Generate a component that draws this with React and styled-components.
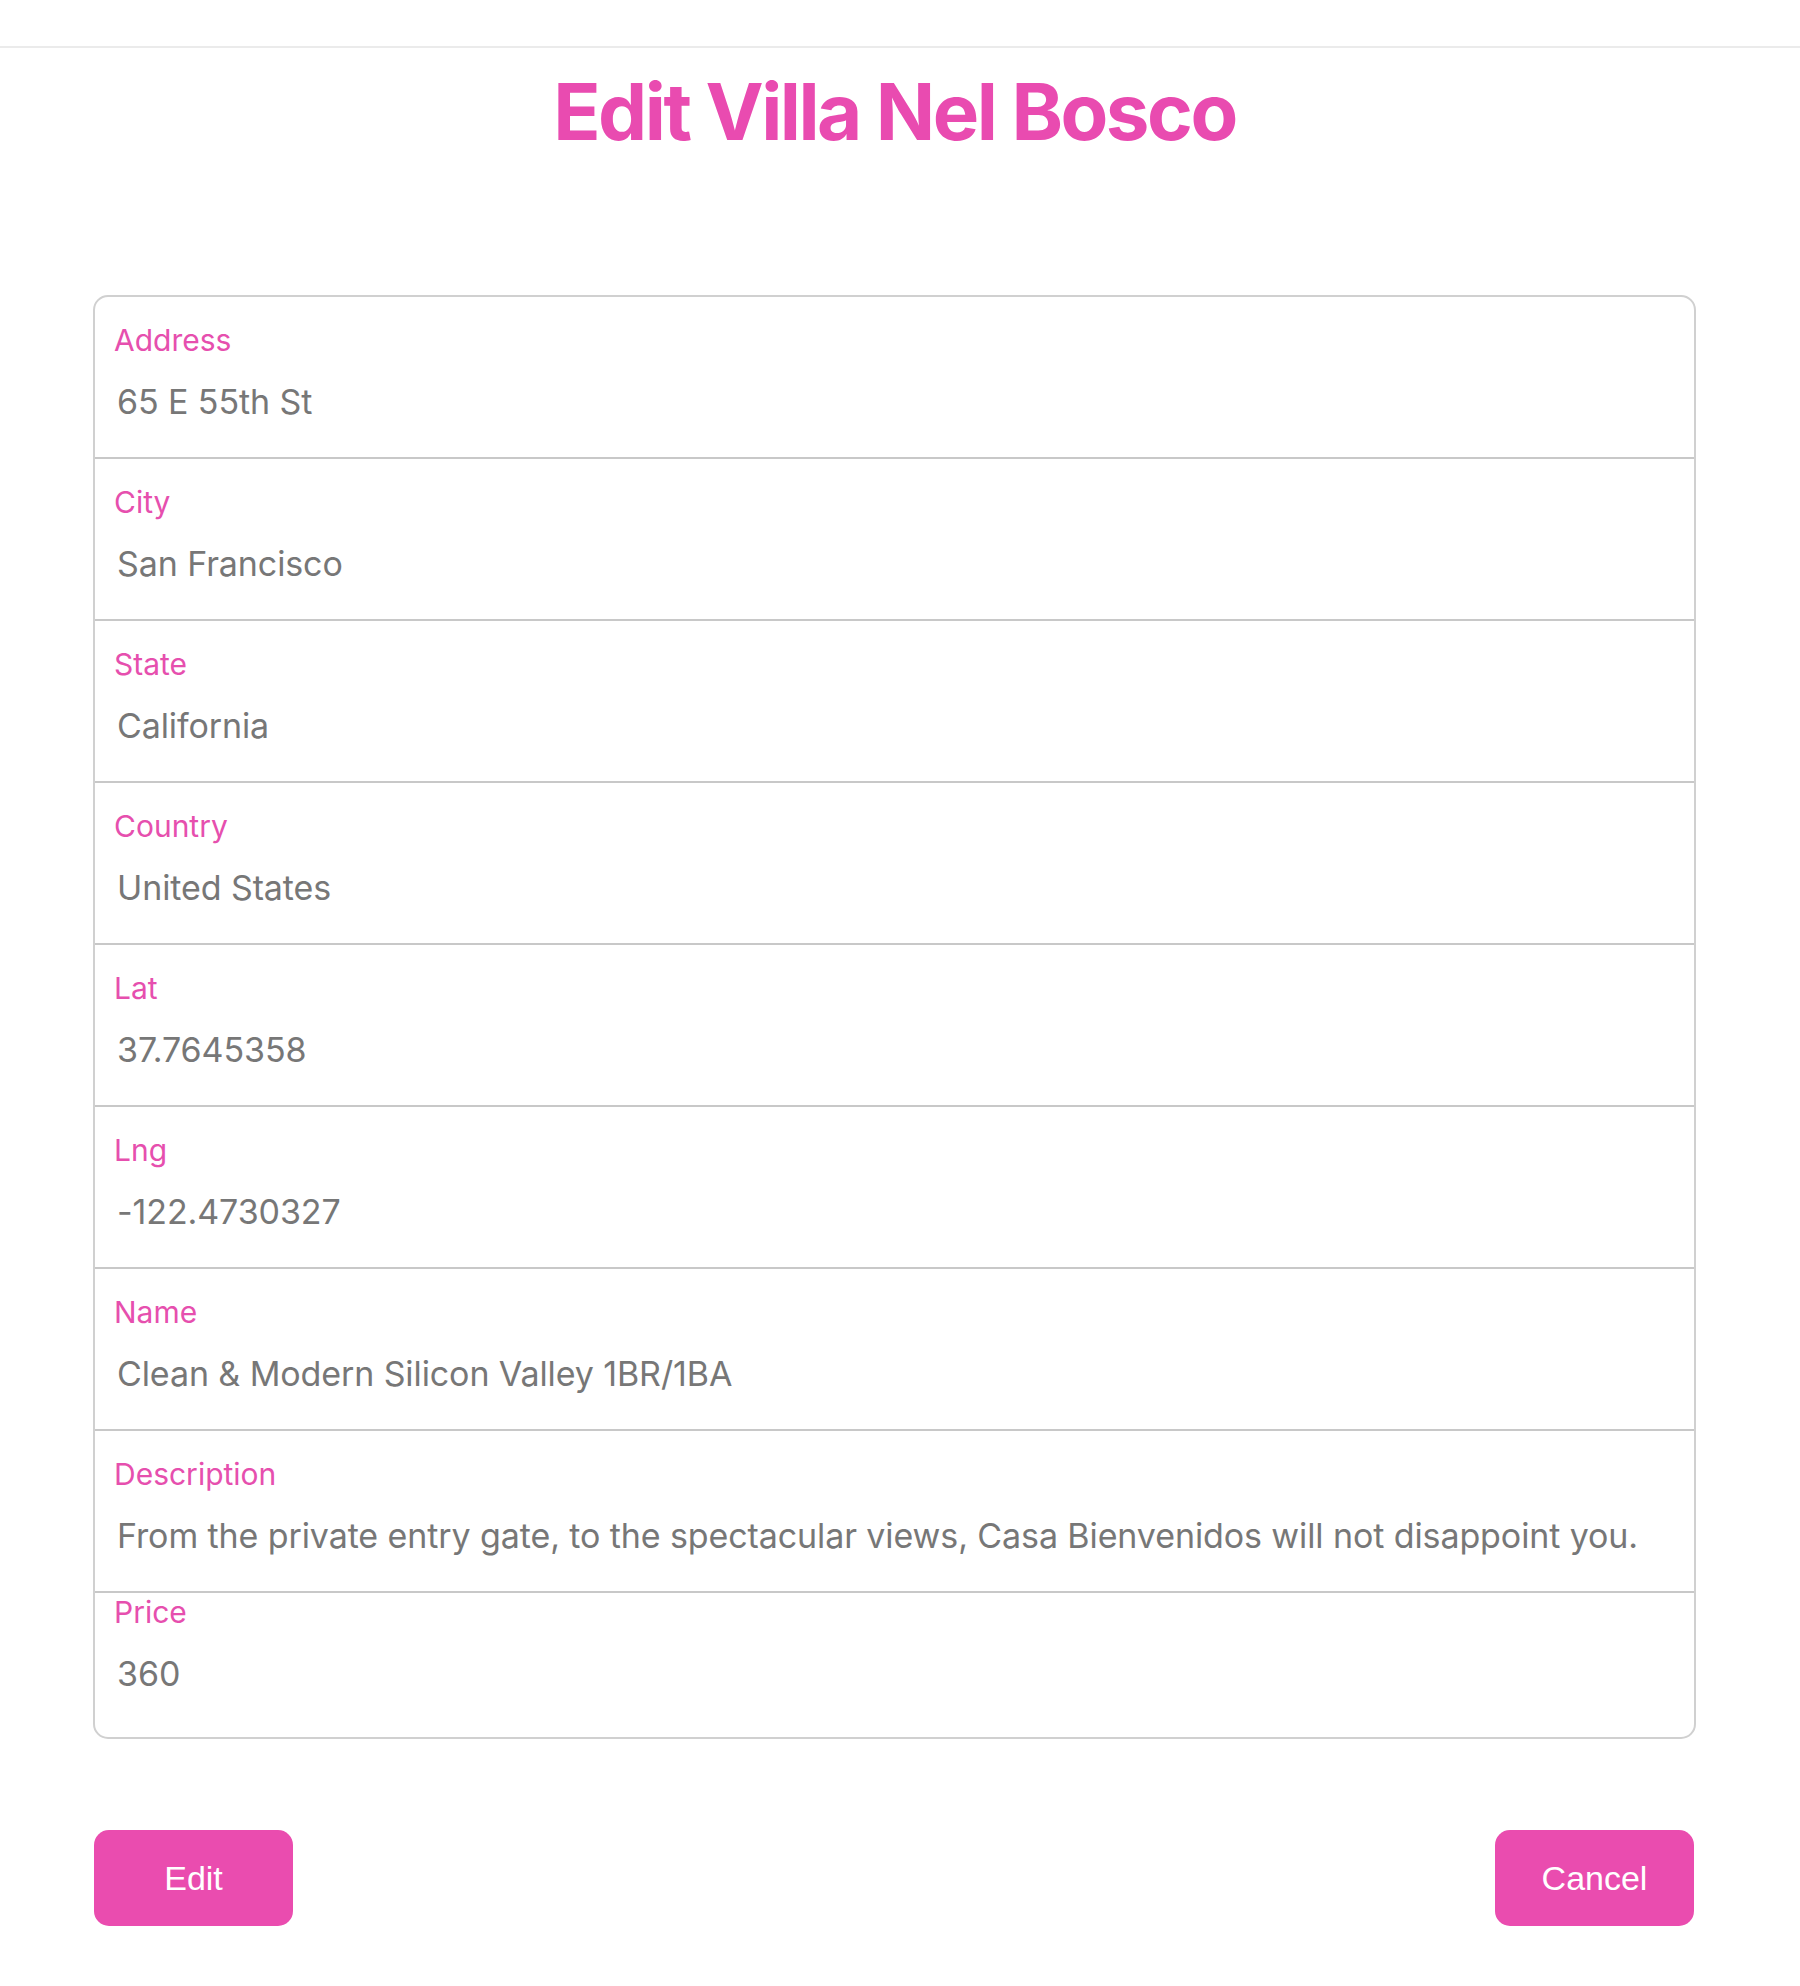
import React from "react"
import styled, { createGlobalStyle } from "styled-components"

const GlobalStyle = createGlobalStyle`
    html, body {
        margin: 0;
        padding: 0;
        background: #ffffff;
    }
    body {
        font-family: Inter, "Noto Sans", sans-serif;
    }
`

const fields = [
    { label: "Address", value: "65 E 55th St" },
    { label: "City", value: "San Francisco" },
    { label: "State", value: "California" },
    { label: "Country", value: "United States" },
    { label: "Lat", value: "37.7645358" },
    { label: "Lng", value: "-122.4730327" },
    { label: "Name", value: "Clean & Modern Silicon Valley 1BR/1BA" },
    { label: "Description", value: "From the private entry gate, to the spectacular views, Casa Bienvenidos will not disappoint you." },
    { label: "Price", value: "360", tight: true },
]

export default function App() {
    return (
        <>
            <GlobalStyle />
            <Nav />
            <Main>
                <Title>Edit Villa Nel Bosco</Title>
                <Card>
                    {fields.map((field, index) => {
                        return (
                            <Row key={index} $tight={field.tight} $last={index === fields.length - 1}>
                                <Label>{field.label}</Label>
                                <Value>{field.value}</Value>
                            </Row>
                        )
                    })}
                </Card>
                <Buttons>
                    <Button type="button">Edit</Button>
                    <Button type="button">Cancel</Button>
                </Buttons>
            </Main>
        </>
    )
}

const Nav = styled.div`
    height: 46px;
    border-bottom: 2px solid #ebebeb;
`

const Main = styled.main`
    width: 1603px;
    margin-left: 93px;
    padding-bottom: 60px;
`

const Title = styled.h1`
    margin: 16px 0 135px;
    text-align: center;
    color: #e94bb0;
    font-family: Inter, sans-serif;
    font-size: 78px;
    font-weight: 700;
    line-height: 96px;
    letter-spacing: -2.5px;
`

const Card = styled.div`
    border: 2px solid #d0d0d0;
    border-radius: 15px;
`

const Row = styled.div`
    padding: ${(props) => (props.$tight ? "1px" : "25px")} 0 0 19px;
    min-height: ${(props) => (props.$tight ? "143px" : "135px")};
    border-bottom: ${(props) => (props.$last ? "none" : "2px solid #c8c8c8")};
`

const Label = styled.div`
    color: #e64fae;
    font-size: 30px;
    line-height: 36px;
`

const Value = styled.div`
    margin-top: 23px;
    padding-left: 3px;
    color: #777777;
    font-size: 34px;
    line-height: 42px;
    letter-spacing: -0.1px;
`

const Buttons = styled.div`
    display: flex;
    justify-content: space-between;
    margin: 91px 2px 0 1px;
`

const Button = styled.button`
    width: 199px;
    height: 96px;
    border: none;
    border-radius: 15px;
    background: #ea4caf;
    color: #ffffff;
    font-family: "Liberation Sans", Arial, sans-serif;
    font-size: 34px;
    cursor: pointer;
`
